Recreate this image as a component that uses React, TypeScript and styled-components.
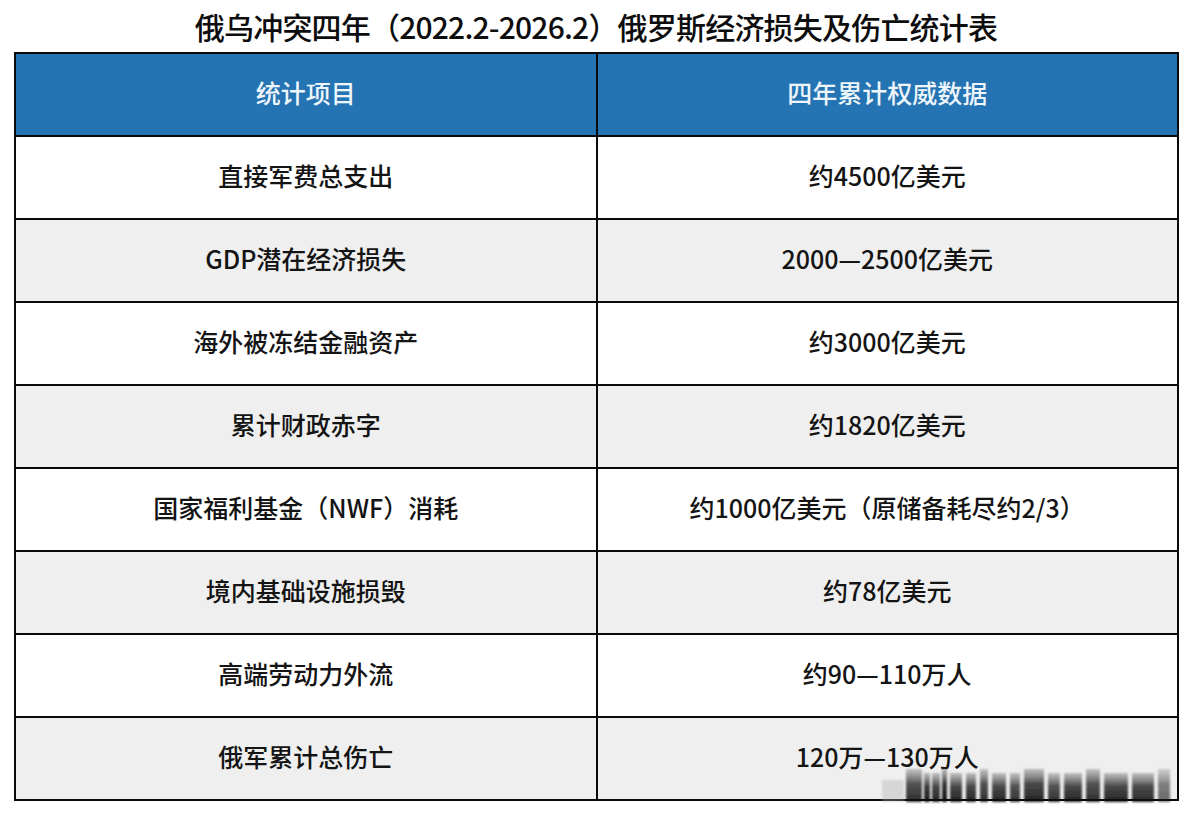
import React from "react";
import styled, { createGlobalStyle } from "styled-components";

const GlobalStyle = createGlobalStyle`
  html, body { margin: 0; padding: 0; background: #ffffff; }
  body { font-family: "Noto Sans CJK SC", "Noto Sans", sans-serif; }
`;

const Page = styled.div`
  width: 1192px;
  height: 816px;
  position: relative;
  background: #ffffff;
  overflow: hidden;
`;

const Title = styled.h1`
  margin: 0;
  height: 52px;
  display: flex;
  align-items: center;
  justify-content: center;
  padding-bottom: 1px;
  box-sizing: border-box;
  font-size: 30px;
  font-weight: 500;
  color: #0d0d0d;
  letter-spacing: -0.8px;
`;

const Table = styled.table`
  margin-left: 14px;
  width: 1165px;
  border-collapse: collapse;
  table-layout: fixed;
  border: 2px solid #0a0a0a;
`;

const HeadCell = styled.th`
  height: 75px;
  padding: 0 0 6px 0;
  background: #2473b2;
  color: #eef6fb;
  font-size: 25px;
  font-weight: 500;
  text-align: center;
  border: 2px solid #0a0a0a;
`;

const Row = styled.tr<{ $alt: boolean }>`
  background: ${(p) => (p.$alt ? "#efefef" : "#ffffff")};
`;

const Cell = styled.td`
  height: 75px;
  padding: 0 0 6px 0;
  color: #141414;
  font-size: 25px;
  font-weight: 500;
  text-align: center;
  border: 2px solid #0a0a0a;
`;

const Watermark = styled.svg`
  position: absolute;
  left: 880px;
  top: 766px;
  width: 300px;
  height: 38px;
  pointer-events: none;
`;

const rows: [string, string][] = [
  ["直接军费总支出", "约4500亿美元"],
  ["GDP潜在经济损失", "2000—2500亿美元"],
  ["海外被冻结金融资产", "约3000亿美元"],
  ["累计财政赤字", "约1820亿美元"],
  ["国家福利基金（NWF）消耗", "约1000亿美元（原储备耗尽约2/3）"],
  ["境内基础设施损毁", "约78亿美元"],
  ["高端劳动力外流", "约90—110万人"],
  ["俄军累计总伤亡", "120万—130万人"],
];

const stripes = [
  [26, 16, 0.85], [44, 6, 0.95], [52, 8, 0.9], [62, 5, 1], [70, 12, 0.9],
  [86, 10, 0.9], [100, 8, 0.85], [112, 14, 0.9], [130, 10, 0.85], [144, 20, 0.9],
  [168, 12, 0.85], [184, 18, 0.9], [206, 14, 0.85], [224, 24, 0.9], [252, 22, 0.88],
  [278, 12, 0.6],
];

export default function App() {
  return (
    <Page>
      <GlobalStyle />
      <Title>俄乌冲突四年（2022.2-2026.2）俄罗斯经济损失及伤亡统计表</Title>
      <Table>
        <thead>
          <tr>
            <HeadCell>统计项目</HeadCell>
            <HeadCell>四年累计权威数据</HeadCell>
          </tr>
        </thead>
        <tbody>
          {rows.map(([a, b], i) => (
            <Row key={a} $alt={i % 2 === 1}>
              <Cell>{a}</Cell>
              <Cell>{b}</Cell>
            </Row>
          ))}
        </tbody>
      </Table>
      <Watermark viewBox="0 0 300 38">
        <defs>
          <linearGradient id="wmfade" x1="0" y1="0" x2="0" y2="1">
            <stop offset="0" stopColor="#666" stopOpacity="0.4" />
            <stop offset="0.45" stopColor="#222" stopOpacity="0.9" />
            <stop offset="1" stopColor="#0d0d0d" stopOpacity="1" />
          </linearGradient>
          <filter id="wmblur">
            <feGaussianBlur stdDeviation="1" />
          </filter>
        </defs>
        <g filter="url(#wmblur)">
          <rect x="2" y="14" width="22" height="22" fill="#aaa" opacity="0.35" />
          {stripes.map(([x, w, o], i) => (
            <rect key={i} x={x} y={i % 3 === 0 ? 3 : 7} width={w} height={i % 3 === 0 ? 33 : 29} fill="url(#wmfade)" opacity={o} />
          ))}
        </g>
      </Watermark>
    </Page>
  );
}
